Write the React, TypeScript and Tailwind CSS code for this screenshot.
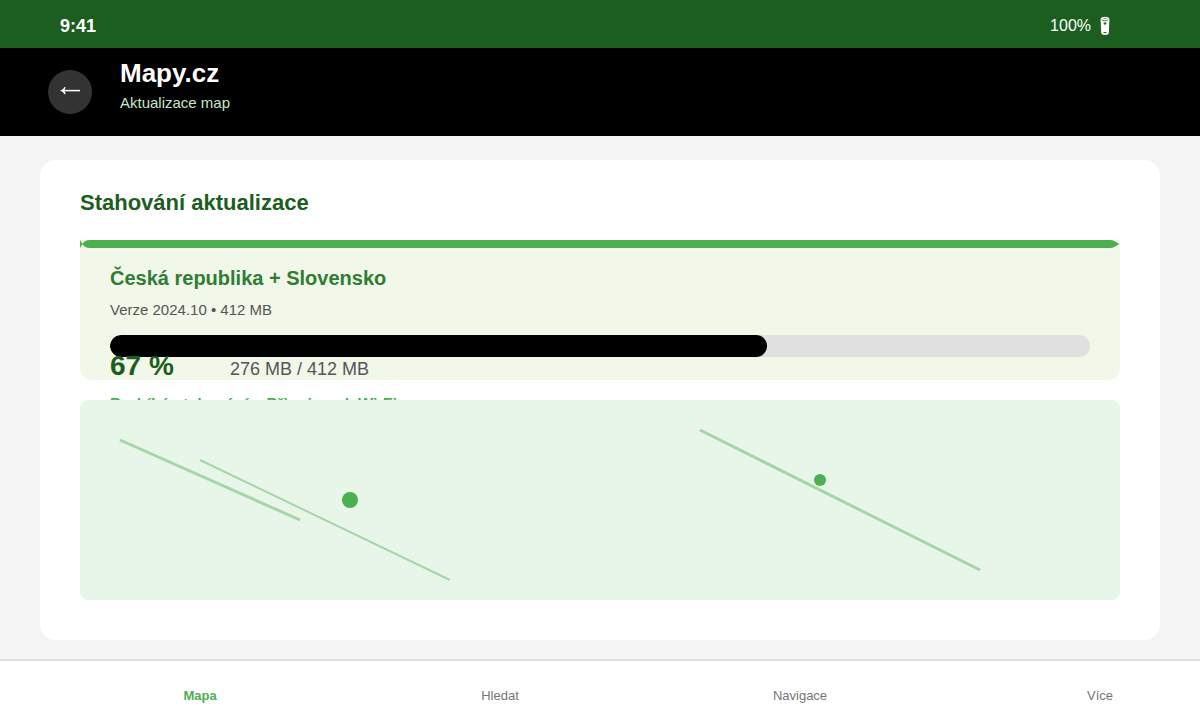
const TABS = [
  { id: "mapa", label: "Mapa", active: true },
  { id: "hledat", label: "Hledat", active: false },
  { id: "navigace", label: "Navigace", active: false },
  { id: "vice", label: "Více", active: false },
];

const DOWNLOAD = {
  region: "Česká republika + Slovensko",
  version: "Verze 2024.10 • 412 MB",
  percent: 67,
  amount: "276 MB / 412 MB",
  status: "Probíhá stahování – Připojeno k Wi-Fi",
};

function BatteryIcon() {
  return (
    <svg width="11" height="20" viewBox="0 0 11 20" aria-hidden="true">
      <path d="M1.6 3.4C1.6 1.8 3 .8 6 .8s4.4 1 4.4 2.6L9.8 16.8C9.7 18.2 8.4 19 6 19s-3.7-.8-3.8-2.2z" fill="#fff" />
      <path d="M2.6 3.6c1.2 1.4 5.6 1.4 6.8 0M4.4 2.3h3.2" fill="none" stroke="#1b5e20" strokeWidth="0.7" />
      <path d="M6 5.8v3.4M4.6 7.4h2.8" stroke="#1b5e20" strokeWidth="1" />
      <ellipse cx="6" cy="16.6" rx="1.7" ry="0.7" fill="#1b5e20" />
    </svg>
  );
}

function StatusBar() {
  return (
    <div className="flex h-12 items-center justify-between bg-[#1b5e20] pt-1 pr-[90px] pl-[60px] text-white">
      <span className="text-lg font-bold">9:41</span>
      <span className="flex items-center gap-2 text-base">
        100%
        <BatteryIcon />
      </span>
    </div>
  );
}

function Header() {
  return (
    <header className="flex h-[88px] items-center gap-7 bg-black px-12">
      <button
        type="button"
        aria-label="Zpět"
        className="flex size-11 items-center justify-center rounded-full bg-[#333333]"
      >
        <svg width="22" height="14" viewBox="0 0 22 14" aria-hidden="true">
          <path d="M4 5.6h17" fill="none" stroke="#fff" strokeWidth="1.5" />
          <path d="M1 5.6C3.2 4.9 4.6 3.6 5.4 1.9l1.2.4C6.2 3.6 5.8 4.8 5.4 5.6c.4.8.8 2 1.2 3.3l-1.2.4C4.6 7.6 3.2 6.3 1 5.6z" fill="#fff" />
        </svg>
      </button>
      <div className="pb-2.5">
        <h1 className="text-[26px] leading-8 font-bold text-white">Mapy.cz</h1>
        <p className="text-[15px] leading-7 text-[#c8e6c9]">Aktualizace map</p>
      </div>
    </header>
  );
}

// Green strip on top of the card, with tapered ends
function AccentStrip() {
  return (
    <div className="flex h-2">
      <svg width="12" height="8" viewBox="0 0 12 8" fill="#4caf50" aria-hidden="true">
        <path d="M0 0L2.6 4 0 8z" />
        <path d="M12 0H9.6C6.4 0 4.2 1.4 2.2 4 4.2 6.6 6.4 8 9.6 8H12z" />
      </svg>
      <div className="flex-1 bg-[#4caf50]" />
      <svg width="12" height="8" viewBox="0 0 12 8" fill="#4caf50" aria-hidden="true">
        <path d="M0 0h2.4C5.4 0 8 1.8 11.2 4 8 6.2 5.4 8 2.4 8H0z" />
      </svg>
    </div>
  );
}

function DownloadCard() {
  return (
    <section>
      <div className="h-[140px] rounded-b-xl bg-[#f1f8e9]">
        <AccentStrip />
        <div className="px-[30px] pt-4">
          <h3 className="text-xl leading-7 font-bold text-[#2e7d32]">{DOWNLOAD.region}</h3>
          <p className="pt-1 text-[15px] leading-7 text-[#555555]">{DOWNLOAD.version}</p>
          <div className="mt-[11px] h-[22px] overflow-hidden rounded-full bg-[#e0e0e0]">
            <div
              role="progressbar"
              aria-label={DOWNLOAD.region}
              aria-valuenow={DOWNLOAD.percent}
              aria-valuemin={0}
              aria-valuemax={100}
              className="h-full rounded-full bg-black"
              style={{ width: `${DOWNLOAD.percent}%` }}
            />
          </div>
          <div className="relative -mt-[7px] flex items-baseline">
            <span className="w-[120px] text-[28px] leading-8 font-bold text-[#1b5e20]">
              {DOWNLOAD.percent} %
            </span>
            <span className="text-lg leading-6 text-[#555555]">{DOWNLOAD.amount}</span>
          </div>
        </div>
      </div>
      <p className="px-[30px] pt-[15px] text-base leading-5 font-bold text-[#4caf50]">{DOWNLOAD.status}</p>
    </section>
  );
}

// The map slides up over the status line
function MapPreview() {
  return (
    <div className="relative -mt-[15px] h-[200px] overflow-hidden rounded-lg bg-[#e8f5e9]">
      <svg width="1040" height="200" viewBox="0 0 1040 200" role="img" aria-label="Náhled mapy">
        <g stroke="#a5d6a7" strokeWidth="3">
          <path d="M40 40L220 120" />
          <path d="M120 60L370 180" strokeWidth="2" />
          <path d="M620 30L900 170" />
        </g>
        <circle cx="270" cy="100" r="8" fill="#4caf50" />
        <circle cx="740" cy="80" r="6" fill="#4caf50" />
      </svg>
    </div>
  );
}

export default function App() {
  return (
    <div className="flex min-h-screen flex-col bg-[#f5f5f5] font-['Liberation_Sans',Arial,sans-serif]">
      <StatusBar />
      <Header />
      <main className="flex-1 px-10 pt-6 pb-[19px]">
        <div className="rounded-2xl bg-white px-10 pt-6 pb-10">
          <h2 className="pt-px pb-[19px] text-[22px] leading-9 font-bold text-[#1b5e20]">Stahování aktualizace</h2>
          <DownloadCard />
          <MapPreview />
        </div>
      </main>
      <nav className="grid h-[61px] grid-cols-[2fr_1fr_2fr_1fr] items-center border-t-2 border-[#e0e0e0] bg-white pt-2.5 text-center text-[13px]">
        {TABS.map((tab) => (
          <a
            key={tab.id}
            href={`#${tab.id}`}
            aria-current={tab.active ? "page" : undefined}
            className={tab.active ? "font-bold text-[#4caf50]" : "text-[#757575]"}
          >
            {tab.label}
          </a>
        ))}
      </nav>
    </div>
  );
}
